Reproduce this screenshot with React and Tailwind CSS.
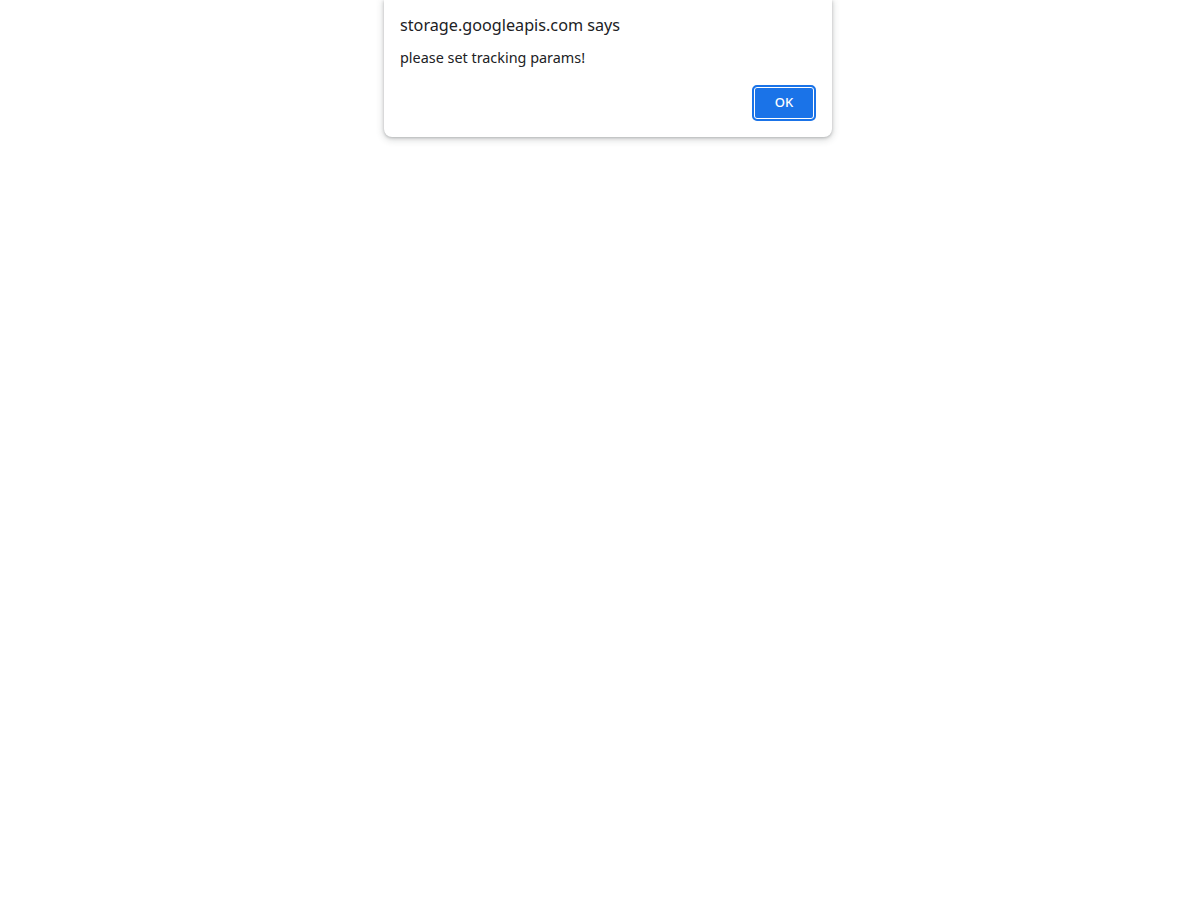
export default function App() {
  return (
    <div className="min-h-[900px] w-full bg-white font-['Noto_Sans',sans-serif]">
      <div className="flex justify-center">
        <div className="w-[448px] ml-[16px] bg-white rounded-b-lg shadow-[0_1px_3px_rgba(60,64,67,0.3),0_2px_6px_2px_rgba(60,64,67,0.15)] px-4 pt-[14px] pb-[16px]">
          <div className="text-[16.2px] leading-[22px] text-[#202124]">storage.googleapis.com says</div>
          <div className="mt-[12px] text-[14.4px] leading-[19px] text-[#202124]">please set tracking params!</div>
          <div className="mt-[18px] flex justify-end">
            <button className="w-[64px] h-[36px] rounded-[5px] bg-[#1a73e8] border-2 border-[#1a73e8] shadow-[inset_0_0_0_1px_#fff] text-white text-[13px] font-medium flex items-center justify-center">
              OK
            </button>
          </div>
        </div>
      </div>
    </div>
  );
}
